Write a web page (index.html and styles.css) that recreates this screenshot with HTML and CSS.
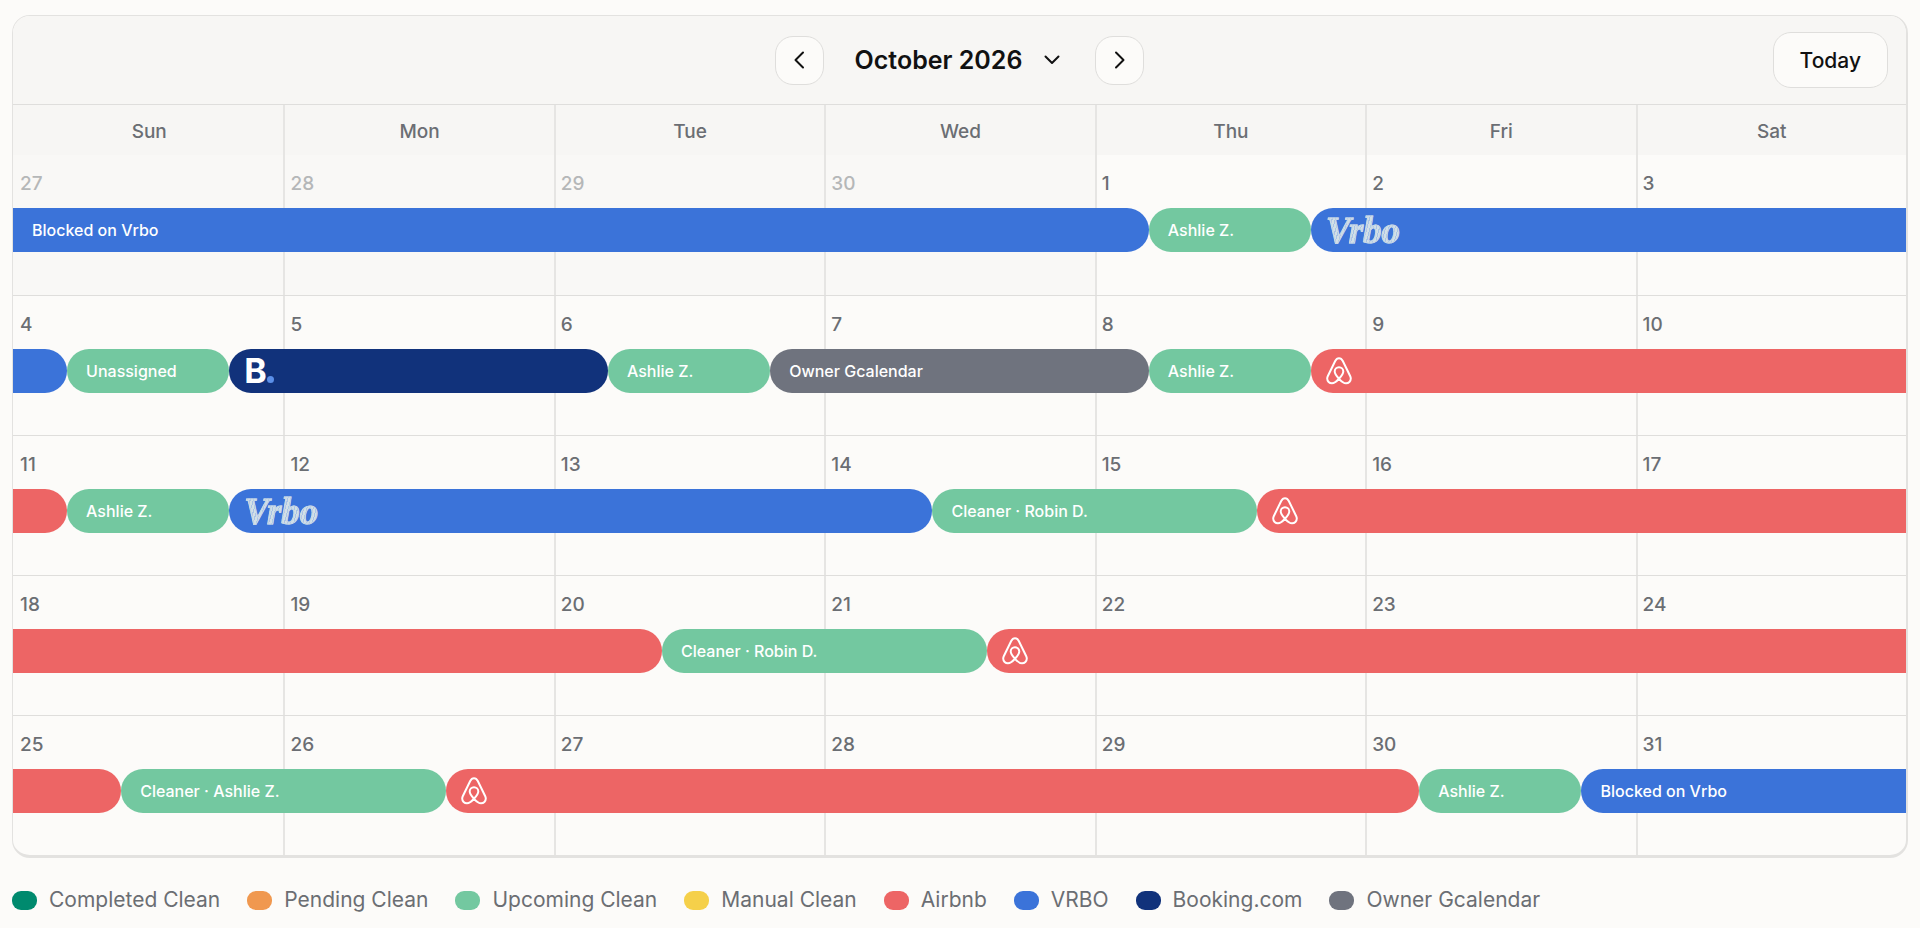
FILE: index.html
```html
<!DOCTYPE html>
<html lang="en">
<head>
    <meta charset="UTF-8">
    <meta name="viewport" content="width=device-width, initial-scale=1.0">
    <title>October 2026</title>
    <link rel="stylesheet" href="styles.css">
</head>
<body>
    <!-- shared icon shapes -->
    <svg class="sprite" aria-hidden="true">
        <symbol id="airbnb" viewBox="0 0 26 28">
            <path d="M13 21.8C10.300 18.900 8.700 16.600 8.700 14.600a4.300 4.300 0 0 1 8.600 0c0 2-1.600 4.300-4.300 7.200-2.500 2.800-4.500 4.500-7 4.500A4.700 4.700 0 0 1 1.200 21.600c0-1 .3-1.800.8-2.900L9.200 4C10.100 2.200 11.300 1.200 13 1.200s2.900 1 3.800 2.800L24 18.700c.5 1.100.8 1.900.8 2.900a4.700 4.700 0 0 1-4.800 4.700c-2.500 0-4.500-1.700-7-4.500z" fill="none" stroke="#fff" stroke-width="2" stroke-linejoin="round"/>
        </symbol>
    </svg>

    <section class="calendar">
        <header class="toolbar">
            <div class="month-nav">
                <button class="btn arrow" type="button" aria-label="Previous month">
                    <svg width="12" height="18" viewBox="0 0 12 18"><path d="M10 1.500L2.500 9l7.500 7.500"/></svg>
                </button>
                <button class="month" type="button">
                    <span>October 2026</span>
                    <svg width="16" height="10" viewBox="0 0 16 10"><path d="M1.500 1.500L8 8l6.500-6.500"/></svg>
                </button>
                <button class="btn arrow" type="button" aria-label="Next month">
                    <svg width="12" height="18" viewBox="0 0 12 18"><path d="M2 1.500L9.500 9L2 16.500"/></svg>
                </button>
            </div>
            <button class="btn today" type="button">Today</button>
        </header>

        <div class="weekdays">
            <div>Sun</div><div>Mon</div><div>Tue</div><div>Wed</div><div>Thu</div><div>Fri</div><div>Sat</div>
        </div>

        <!-- each day is five columns wide, bars span those columns -->
        <div class="weeks">
            <div class="week">
                <div class="days">
                    <div class="day other">27</div><div class="day other">28</div><div class="day other">29</div><div class="day other">30</div><div class="day">1</div><div class="day">2</div><div class="day">3</div>
                </div>
                <div class="bars">
                    <div class="bar vrbo from-prev" style="grid-column: span 21">Blocked on Vrbo</div>
                    <div class="bar upcoming" style="grid-column: span 3">Ashlie Z.</div>
                    <div class="bar vrbo logo to-next" style="grid-column: span 11"><span class="vrbo-logo">Vrbo</span></div>
                </div>
            </div>
            <div class="week">
                <div class="days">
                    <div class="day">4</div><div class="day">5</div><div class="day">6</div><div class="day">7</div><div class="day">8</div><div class="day">9</div><div class="day">10</div>
                </div>
                <div class="bars">
                    <div class="bar vrbo from-prev" style="grid-column: span 1"></div>
                    <div class="bar upcoming" style="grid-column: span 3">Unassigned</div>
                    <div class="bar booking logo" style="grid-column: span 7"><span class="booking-logo">B<i></i></span></div>
                    <div class="bar upcoming" style="grid-column: span 3">Ashlie Z.</div>
                    <div class="bar owner" style="grid-column: span 7">Owner Gcalendar</div>
                    <div class="bar upcoming" style="grid-column: span 3">Ashlie Z.</div>
                    <div class="bar airbnb logo to-next" style="grid-column: span 11"><svg class="airbnb-logo" role="img" aria-label="Airbnb"><use href="#airbnb"/></svg></div>
                </div>
            </div>
            <div class="week">
                <div class="days">
                    <div class="day">11</div><div class="day">12</div><div class="day">13</div><div class="day">14</div><div class="day">15</div><div class="day">16</div><div class="day">17</div>
                </div>
                <div class="bars">
                    <div class="bar airbnb from-prev" style="grid-column: span 1"></div>
                    <div class="bar upcoming" style="grid-column: span 3">Ashlie Z.</div>
                    <div class="bar vrbo logo" style="grid-column: span 13"><span class="vrbo-logo">Vrbo</span></div>
                    <div class="bar upcoming" style="grid-column: span 6">Cleaner · Robin D.</div>
                    <div class="bar airbnb logo to-next" style="grid-column: span 12"><svg class="airbnb-logo" role="img" aria-label="Airbnb"><use href="#airbnb"/></svg></div>
                </div>
            </div>
            <div class="week">
                <div class="days">
                    <div class="day">18</div><div class="day">19</div><div class="day">20</div><div class="day">21</div><div class="day">22</div><div class="day">23</div><div class="day">24</div>
                </div>
                <div class="bars">
                    <div class="bar airbnb from-prev" style="grid-column: span 12"></div>
                    <div class="bar upcoming" style="grid-column: span 6">Cleaner · Robin D.</div>
                    <div class="bar airbnb logo to-next" style="grid-column: span 17"><svg class="airbnb-logo" role="img" aria-label="Airbnb"><use href="#airbnb"/></svg></div>
                </div>
            </div>
            <div class="week">
                <div class="days">
                    <div class="day">25</div><div class="day">26</div><div class="day">27</div><div class="day">28</div><div class="day">29</div><div class="day">30</div><div class="day">31</div>
                </div>
                <div class="bars">
                    <div class="bar airbnb from-prev" style="grid-column: span 2"></div>
                    <div class="bar upcoming" style="grid-column: span 6">Cleaner · Ashlie Z.</div>
                    <div class="bar airbnb logo" style="grid-column: span 18"><svg class="airbnb-logo" role="img" aria-label="Airbnb"><use href="#airbnb"/></svg></div>
                    <div class="bar upcoming" style="grid-column: span 3">Ashlie Z.</div>
                    <div class="bar vrbo to-next" style="grid-column: span 6">Blocked on Vrbo</div>
                </div>
            </div>
        </div>
    </section>

    <ul class="legend">
        <li><span class="swatch completed"></span>Completed Clean</li>
        <li><span class="swatch pending"></span>Pending Clean</li>
        <li><span class="swatch upcoming"></span>Upcoming Clean</li>
        <li><span class="swatch manual"></span>Manual Clean</li>
        <li><span class="swatch airbnb"></span>Airbnb</li>
        <li><span class="swatch vrbo"></span>VRBO</li>
        <li><span class="swatch booking"></span>Booking.com</li>
        <li><span class="swatch owner"></span>Owner Gcalendar</li>
    </ul>
</body>
</html>
```
FILE: styles.css
```css
* {
    box-sizing: border-box;
}

body {
    display: flex;
    flex-direction: column;
    min-height: 100vh;
    margin: 0;
    padding: 15px 12px 13px;
    background-color: #fcfbf9;
    color: #6b6e73;
    font-family: Inter, sans-serif;
}

.sprite {
    display: none;
}

.calendar {
    flex: 1;
    display: flex;
    flex-direction: column;
    border: 1px solid #e3e2e0;
    border-right-width: 2px;
    border-bottom-width: 3px;
    border-radius: 18px;
    overflow: hidden;
}

.toolbar {
    display: grid;
    grid-template-columns: 1fr auto 1fr;
    align-items: center;
    height: 89px;
    padding: 0 18px;
    background-color: #f7f6f4;
    border-bottom: 1px solid #dfdedc;
}

.month-nav {
    grid-column: 2;
    display: flex;
    align-items: center;
    gap: 31px;
}

button {
    font-family: inherit;
    color: #111;
    cursor: pointer;
}

.btn {
    background-color: #fcfbf9;
    border: 1px solid #dfdedc;
    border-radius: 18px;
}

.arrow {
    display: flex;
    align-items: center;
    justify-content: center;
    width: 49px;
    height: 49px;
    padding: 0;
}

.month {
    display: flex;
    align-items: center;
    gap: 22px;
    padding: 0 4px 0 0;
    border: 0;
    background: none;
    font-size: 25px;
    font-weight: 600;
}

.toolbar svg {
    fill: none;
    stroke: #111;
    stroke-width: 2;
    stroke-linecap: round;
    stroke-linejoin: round;
}

.today {
    justify-self: end;
    height: 56px;
    padding: 0 26px;
    font-size: 21px;
    font-weight: 500;
}

.weekdays,
.days {
    display: grid;
    grid-template-columns: repeat(7, 1fr);
}

.weekdays {
    height: 50px;
    background-color: #f7f6f4;
    font-size: 19px;
    font-weight: 500;
    line-height: 54px;
    text-align: center;
}

.weekdays div,
.day {
    border-left: 2px solid #e6e5e3;
}

.weekdays div:first-child,
.day:first-child {
    border-left-color: transparent;
}

.weeks {
    flex: 1;
    display: grid;
    grid-template-rows: repeat(5, 1fr);
}

.week {
    display: grid;
}

.week + .week {
    border-top: 1px solid #dfdedc;
}

/* days and bars share one cell so the bars lie over the day columns */
.days,
.bars {
    grid-area: 1 / 1;
}

.day {
    padding: 17px 5px;
    font-size: 19px;
    font-weight: 500;
    line-height: 24px;
}

.other {
    background-color: #f9f8f6;
    color: #b5b7b8;
}

.bars {
    display: grid;
    grid-template-columns: repeat(35, 1fr);
    align-content: start;
    padding-top: 53px;
    padding-bottom: 40px;
}

.bar {
    display: flex;
    align-items: center;
    min-width: 0;
    height: 44px;
    padding: 0 19px;
    border-radius: 22px;
    color: #fff;
    font-size: 16px;
    font-weight: 500;
    white-space: nowrap;
}

.from-prev {
    border-top-left-radius: 0;
    border-bottom-left-radius: 0;
}

.to-next {
    border-top-right-radius: 0;
    border-bottom-right-radius: 0;
}

.logo {
    padding: 0 15px;
}

.completed { background-color: #008a6e; }
.pending { background-color: #f0984f; }
.upcoming { background-color: #73c8a0; }
.manual { background-color: #f5d04a; }
.airbnb { background-color: #ed6565; }
.vrbo { background-color: #3b73d9; }
.booking { background-color: #11327b; }
.owner { background-color: #6f737e; }

.airbnb-logo {
    width: 26px;
    height: 28px;
}

.vrbo-logo {
    padding: 2px 4px 0 0;
    background: repeating-linear-gradient(105deg, #d3e0e6 0 2px, #a9c3e6 2px 3px);
    -webkit-background-clip: text;
    background-clip: text;
    -webkit-text-stroke: 1px #c6d7e6;
    color: transparent;
    font-family: "Liberation Serif", serif;
    font-size: 37px;
    font-style: italic;
    font-weight: 700;
    line-height: 40px;
}

.booking-logo {
    display: flex;
    align-items: baseline;
    font-size: 34px;
    font-weight: 700;
    line-height: 40px;
}

.booking-logo i {
    width: 7px;
    height: 7px;
    border-radius: 50%;
    background-color: #5b8fe8;
}

.legend {
    display: flex;
    flex-wrap: wrap;
    gap: 8px 27px;
    margin: 27px 0 0;
    padding: 0;
    list-style: none;
    font-size: 21px;
    line-height: 30px;
}

.legend li {
    display: flex;
    align-items: center;
    gap: 12px;
}

.swatch {
    width: 25px;
    height: 19px;
    border-radius: 9px;
}
```
